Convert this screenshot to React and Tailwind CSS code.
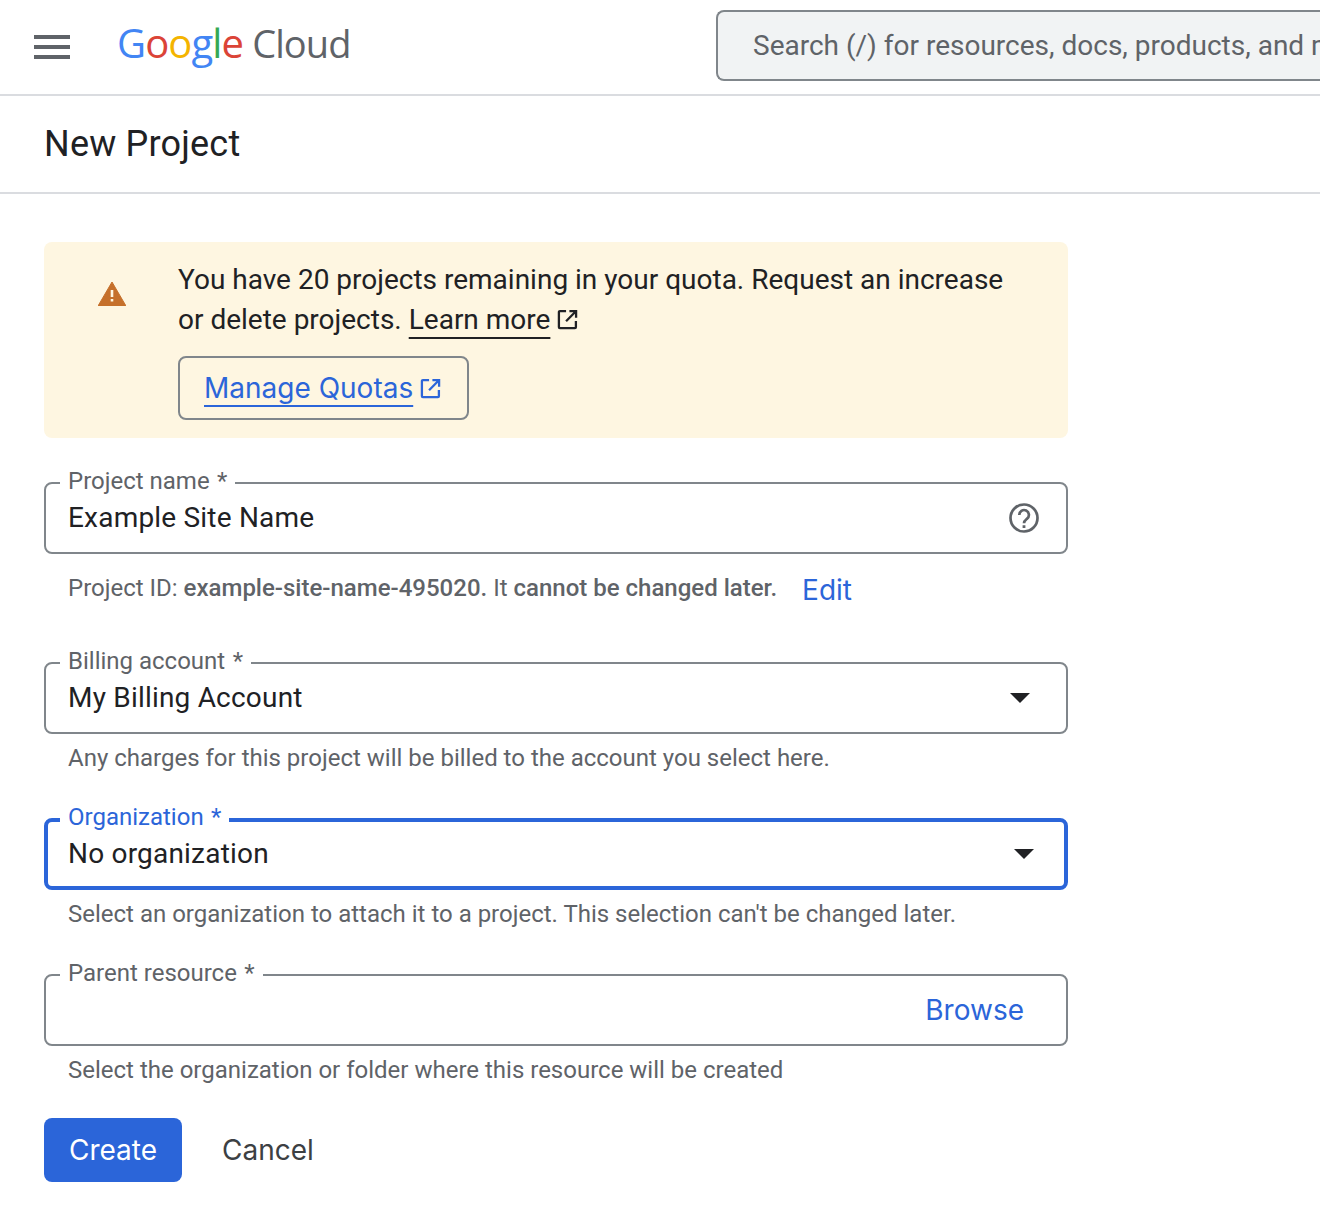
import React from 'react'

function ExternalIcon({ className }) {
  return (
    <svg viewBox="0 0 22 22" fill="none" stroke="currentColor" strokeWidth="2.4" className={className}>
      <path d="M9.5 2.2H3a1 1 0 0 0-1 1V19a1 1 0 0 0 1 1h15.8a1 1 0 0 0 1-1v-6.5" />
      <path d="M13 2.2h7v7M19.8 2.4 9.5 12.8" />
    </svg>
  )
}

function Caret({ className }) {
  return (
    <svg viewBox="0 0 20 10" className={className}>
      <path d="M0 0h20L10 10z" fill="currentColor" />
    </svg>
  )
}

function Field({ label, focused, children }) {
  return (
    <div className={`relative flex h-[72px] w-[1024px] items-center rounded-lg bg-white pr-6 text-[28px] leading-9 text-[#202124] ${focused ? 'border-4 border-[#2b65d9] pl-5' : 'border-2 border-[#80868b] pl-[22px]'}`}>
      <span className={`absolute bg-white px-2 text-[24px] leading-7 whitespace-nowrap ${focused ? 'left-3 -top-[19px] text-[#2b65d9]' : 'left-[14px] -top-[17px] text-[#5f6368]'}`}>
        {label} <span className="ml-[1.5px]">*</span>
      </span>
      {children}
    </div>
  )
}

export default function App() {
  return (
    <div className="h-[1230px] w-[1320px] overflow-hidden bg-white font-['Roboto',sans-serif]">
      <header className="flex h-[96px] items-center border-b-2 border-[#dadce0]">
        <div className="ml-[34px] flex w-9 shrink-0 flex-col gap-[6px]">
          <span className="h-1 bg-[#5f6368]" />
          <span className="h-1 bg-[#5f6368]" />
          <span className="h-1 bg-[#5f6368]" />
        </div>
        <div className="ml-[47px] -mt-[8px] flex w-[599px] shrink-0 items-baseline font-['Open_Sans',sans-serif] text-[40px] leading-none tracking-[-0.9px]">
          <span className="text-[#4285f4]">G</span>
          <span className="text-[#db4437]">o</span>
          <span className="text-[#f4b400]">o</span>
          <span className="text-[#4285f4]">g</span>
          <span className="text-[#34a853]">l</span>
          <span className="text-[#db4437]">e</span>
          <span className="ml-[9px] text-[38px] text-[#5f6368]">Cloud</span>
        </div>
        <div className="-mt-[3px] flex h-[71px] w-[604px] shrink-0 items-center overflow-hidden whitespace-nowrap rounded-l-lg border-2 border-r-0 border-[#80868b] bg-[#f1f3f4] pl-[35px] text-[28px] text-[#5f6368]">
          Search (/) for resources, docs, products, and more
        </div>
      </header>

      <div className="flex h-[98px] items-center border-b-2 border-[#dadce0] pl-[44px] text-[36px] tracking-[0.2px] text-[#202124]">
        New Project
      </div>

      <main className="pl-[44px] pt-[48px]">
        <section className="flex h-[196px] w-[1024px] rounded-lg bg-[#fef6e1]">
          <svg viewBox="0 0 28 24" className="ml-[54px] mt-[40px] h-6 w-7 shrink-0">
            <path d="M14 0 28 24H0z" fill="#c5702b" stroke="#c5702b" strokeWidth="1" strokeLinejoin="round" />
            <path d="M12.7 8h2.6v7h-2.6zM12.7 17h2.6v2.6h-2.6z" fill="#fef6e1" />
          </svg>
          <div className="ml-[52px] pt-[18px]">
            <p className="w-[840px] text-[28px] leading-10 text-[#202124]">
              You have 20 projects remaining in your quota. Request an increase or delete projects.{' '}
              <span className="underline decoration-2 underline-offset-[8px] [text-decoration-skip-ink:none]">Learn more</span>
              <ExternalIcon className="ml-[7px] inline-block h-[21px] w-[21px] align-[-1px]" />
            </p>
            <div className="mt-4 flex h-[64px] w-[291px] items-center rounded-lg border-2 border-[#80868b] pl-6 font-['Inter',sans-serif] text-[28px] text-[#2b65d9]">
              <span className="underline decoration-2 underline-offset-[7px] [text-decoration-skip-ink:none]">Manage Quotas</span>
              <ExternalIcon className="ml-[7px] h-[21px] w-[21px]" />
            </div>
          </div>
        </section>

        <div className="mt-[44px]">
          <Field label="Project name">
            <span className="flex-1 tracking-[0.2px]">Example Site Name</span>
            <svg viewBox="0 0 30 30" fill="none" className="mr-[3px] h-[30px] w-[30px] text-[#5f6368]" stroke="currentColor" strokeWidth="2.7">
              <circle cx="15" cy="15" r="13.5" />
              <path d="M10.3 12a4.8 4.8 0 1 1 7.8 3.6c-1.7 1.4-3.1 2.3-3.1 4.6" />
              <path d="M13.6 22.2h2.8v2.8h-2.8z" fill="currentColor" stroke="none" />
            </svg>
          </Field>
          <div className="mt-[17px] flex h-9 items-center pl-6 text-[24px] text-[#5f6368]">
            <span className="-mt-[2px]">Project ID: <b className="font-medium">example-site-name-495020.</b> It <b className="font-medium">cannot be changed later.</b></span>
            <span className="ml-[25px] mt-[1px] font-['Inter',sans-serif] text-[28px] text-[#2b65d9]">Edit</span>
          </div>
        </div>

        <div className="mt-[55px]">
          <Field label="Billing account">
            <span className="flex-1 tracking-[0.2px]">My Billing Account</span>
            <Caret className="mr-[12px] h-[10px] w-5 text-[#202124]" />
          </Field>
          <p className="mt-[10px] h-7 pl-6 text-[24px] leading-7 text-[#5f6368]">Any charges for this project will be billed to the account you select here.</p>
        </div>

        <div className="mt-[46px]">
          <Field label="Organization" focused>
            <span className="flex-1 tracking-[0.2px]">No organization</span>
            <Caret className="mr-[6px] h-[10px] w-5 text-[#202124]" />
          </Field>
          <p className="mt-[10px] h-7 pl-6 text-[24px] leading-7 text-[#5f6368]">Select an organization to attach it to a project. This selection can't be changed later.</p>
        </div>

        <div className="mt-[46px]">
          <Field label="Parent resource">
            <span className="flex-1" />
            <span className="mr-[18px] font-['Inter',sans-serif] text-[28px] text-[#2b65d9]">Browse</span>
          </Field>
          <p className="mt-[10px] h-7 pl-6 text-[24px] leading-7 text-[#5f6368]">Select the organization or folder where this resource will be created</p>
        </div>

        <div className="mt-[34px] flex items-center font-['Inter',sans-serif] text-[28px]">
          <button className="h-[64px] w-[138px] rounded-lg bg-[#2b65d9] text-white">Create</button>
          <button className="ml-[40px] text-[#3c4043]">Cancel</button>
        </div>
      </main>
    </div>
  )
}
